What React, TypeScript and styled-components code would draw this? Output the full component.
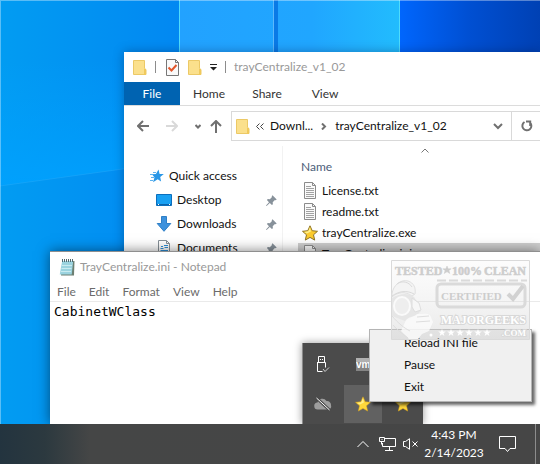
import React from "react";
import styled, { createGlobalStyle } from "styled-components";

const Global = createGlobalStyle`
  *, *::before, *::after { box-sizing: border-box; }
  html, body, #root { margin: 0; min-height: 100vh; }
  body { font: 12px/16px Lato, "Open Sans", sans-serif; color: #111; }
  button, textarea { font: inherit; color: inherit; margin: 0; padding: 0; border: 0; background: none; }
  svg { display: block; flex: none; }
  ul { list-style: none; margin: 0; padding: 0; }
`;

const Desktop = styled.main`
  position: relative;
  min-height: 100vh;
  overflow: hidden;
  display: flex;
  flex-direction: column;
  justify-content: flex-end;
  background: #0592f2;
`;

const Wallpaper = styled.svg`
  position: absolute;
  inset: 0;
`;

const Window = styled.section<{ $x: number; $y: number }>`
  position: absolute;
  left: ${(p) => p.$x}px;
  top: ${(p) => p.$y}px;
  right: 0;
  bottom: 40px;
  display: flex;
  flex-direction: column;
  background: #fff;
  overflow: hidden;
`;

const ExplorerWindow = styled(Window)`
  box-shadow: 0 0 10px rgba(0, 20, 60, 0.35);
`;

const NotepadWindow = styled(Window)`
  border-top: 1px solid #8f8f8f;
  box-shadow: 0 0 12px rgba(0, 0, 0, 0.5);
`;

const TitleBar = styled.header<{ $gap: number }>`
  display: flex;
  align-items: center;
  height: 30px;
  padding-left: 9px;
  gap: ${(p) => p.$gap}px;
  color: #999;
`;

const Title = styled.h1`
  margin: 0;
  font-size: 12px;
  font-weight: 400;
  white-space: nowrap;
`;

const Separator = styled.span`
  width: 1px;
  height: 12px;
  background: #8c8c8c;
`;

const IconSlot = styled.span`
  display: flex;
  justify-content: center;
  width: 16px;
`;

const Tabs = styled.nav`
  display: flex;
  height: 24px;
  border-bottom: 1px solid #dcdcdc;
`;

const Tab = styled.button<{ $active?: boolean }>`
  width: ${(p) => (p.$active ? 56 : 58)}px;
  height: 23px;
  color: ${(p) => (p.$active ? "#fff" : "#333")};
  background: ${(p) => (p.$active ? "#0063b1" : "transparent")};
`;

const AddressRow = styled.div`
  display: flex;
  align-items: center;
  height: 40px;
  padding-left: 13px;
`;

const NavButton = styled.button<{ $w: number }>`
  display: flex;
  justify-content: center;
  width: ${(p) => p.$w}px;
`;

const AddressBox = styled.div`
  flex: 1;
  display: flex;
  align-items: center;
  gap: 6px;
  height: 30px;
  padding-left: 4px;
  border: 1px solid #d9d9d9;
  border-right: 0;
`;

const Crumb = styled.button`
  white-space: nowrap;
`;

const Spacer = styled.span`
  flex: 1;
`;

const RefreshBox = styled.div`
  display: flex;
  align-items: center;
  height: 28px;
  width: 29px;
  padding-left: 9px;
  margin-left: 2px;
  border-left: 1px solid #d9d9d9;
`;

const PlainButton = styled.button`
  display: block;
`;

const ExplorerBody = styled.div`
  flex: 1;
  display: grid;
  grid-template-columns: 159px 1fr;
`;

const Sidebar = styled.ul`
  padding: 18px 5px 0 25px;
  border-right: 1px solid #f2f2f2;
`;

const SideItem = styled.li<{ $child?: boolean }>`
  display: flex;
  align-items: center;
  gap: 5px;
  height: 24px;
  padding-left: ${(p) => (p.$child ? 7 : 1)}px;
`;

const FilePane = styled.div`
  padding-left: 15px;
`;

const FileTable = styled.table`
  width: 100%;
  border-collapse: collapse;

  th {
    position: relative;
    height: 34px;
    padding: 8px 0 0 3px;
    text-align: left;
    font-weight: 400;
    color: #4c607a;
  }
  td {
    height: 21px;
    padding: 0 0 0 4px;
  }
`;

const SortMark = styled.svg`
  position: absolute;
  left: 123px;
  top: 2px;
`;

const FileRow = styled.tr<{ $selected?: boolean }>`
  background: ${(p) => (p.$selected ? "#cfcfcf" : "transparent")};
`;

const FileName = styled.span`
  display: flex;
  align-items: center;
  gap: 4px;
`;

const MenuBar = styled.nav`
  display: flex;
  align-items: center;
  gap: 13px;
  height: 20px;
  padding-left: 7px;
  color: #6b6b6b;
  border-bottom: 1px solid #eaeaea;
`;

const Editor = styled.textarea`
  flex: 1;
  padding: 2px 4px;
  resize: none;
  outline: none;
  color: #000;
  font: 13px/16px "DejaVu Sans Mono", monospace;
`;

const TrayPopup = styled.div`
  position: absolute;
  right: 117px;
  bottom: 40px;
  display: grid;
  grid-template-columns: repeat(3, 40px);
  grid-auto-rows: 40px;
  padding-top: 1px;
  border-left: 1px solid #8a8a8a;
  background: #4b4b4b;
  box-shadow: 0 0 8px rgba(0, 0, 0, 0.4);
`;

const TrayCell = styled.button<{ $hot?: boolean }>`
  display: flex;
  align-items: center;
  justify-content: center;
  margin: 1px;
  background: ${(p) => (p.$hot ? "#616161" : "transparent")};
`;

const ContextMenu = styled.div`
  position: absolute;
  right: 8px;
  bottom: 62px;
  width: 163px;
  display: flex;
  flex-direction: column;
  padding: 2px 0 3px;
  background: #f0f0f0;
  border: 1px solid #b4b4b4;
  box-shadow: 3px 3px 3px rgba(0, 0, 0, 0.6);
`;

const ContextItem = styled.button`
  height: 22px;
  padding-left: 34px;
  text-align: left;
`;

const Stamp = styled.svg`
  position: absolute;
  right: 10px;
  bottom: 124px;
  pointer-events: none;
`;

const Taskbar = styled.footer`
  position: relative;
  display: flex;
  align-items: center;
  justify-content: flex-end;
  height: 40px;
  color: #fff;
  background: linear-gradient(90deg, #23343f 0, #2c393f 45px, #454646 90px, #464646 100%);
`;

const TaskButton = styled.button<{ $w: number }>`
  display: flex;
  align-items: center;
  justify-content: center;
  width: ${(p) => p.$w}px;
  height: 40px;
`;

const Clock = styled.button`
  width: 66px;
  line-height: 18px;
  text-align: center;
`;

const ShowDesktop = styled.button`
  width: 5px;
  height: 40px;
  margin-left: 8px;
  border-left: 1px solid #8c8c8c;
`;

const FolderIcon = () => (
  <svg width="14" height="17" viewBox="0 0 14 17">
    <path d="M.5 1.500h11v8l1.500 1v5H.5z" fill="#fbe08c" stroke="#ecc966" />
    <path d="M11 10h2v6h-2z" fill="#f0c95c" />
  </svg>
);

const CheckDoc = () => (
  <svg width="13" height="17" viewBox="0 0 13 17">
    <path d="M.5.5h9l3 3v13H.5z" fill="#fafafa" stroke="#777" />
    <path d="M9.500.5v3h3" fill="none" stroke="#777" />
    <path d="M2.500 8.500l3 3 5-5.500" fill="none" stroke="#e2562c" strokeWidth="2" />
  </svg>
);

const TextDoc = ({ ini }: { ini?: boolean }) => (
  <svg width="12" height="17" viewBox="0 0 12 17">
    <path d="M.5.5h8l3 3v13H.5z" fill="#fafafa" stroke="#8b8b8b" />
    <path d="M8.500.5v3h3" fill="none" stroke="#8b8b8b" />
    {ini ? (
      <path d="M3 9.500l3-3 3 3-3 3z" fill="#c4c4c4" stroke="#9a9a9a" />
    ) : (
      <path d="M2 4.500h5M2 6.500h8M2 8.500h8M2 10.500h8M2 12.500h8M2 14.500h8" stroke="#a2a2a2" />
    )}
  </svg>
);

const DocumentsIcon = () => (
  <svg width="16" height="16" viewBox="0 0 16 16">
    <path d="M2.500.5h8l3 3v12h-11z" fill="#fff" stroke="#858f96" />
    <path d="M10.500.5v3h3" fill="none" stroke="#858f96" />
    <path d="M5 6.500h2M8 5.500h4M4.500 8.500h3M8.500 7.500h3.500M4.500 10.500h7.500M4.500 12.500h7.500" stroke="#2d8fd8" />
  </svg>
);

const star = "M8 .8l2.200 4.900 5.300.6-4 3.500 1.200 5.300L8 12.400l-4.700 2.700 1.200-5.300-4-3.500 5.300-.6z";

const StarIcon = ({ outlined }: { outlined?: boolean }) => (
  <svg width="16" height="16" viewBox="0 0 16 16">
    <path
      d={star}
      fill={outlined ? "#fccb2e" : "#ffd83b"}
      stroke={outlined ? "#8f7426" : "#d9a31c"}
      strokeWidth={outlined ? 1 : 0.5}
      strokeLinejoin="round"
    />
    <path d="M8 2l.9 4.500L5 8.500 2 7l4.300-.7z" fill="#fff08c" />
  </svg>
);

const QuickStar = () => (
  <svg width="14" height="14" viewBox="0 0 14 14">
    <path d="M8.500.6L9.600 5l4.200.1-3.600 2.900.9 4.600-3.400-2.400L3 13.200l1.500-4.700L2 5.200l3.900-.1z" fill="#2a97e6" />
    <path d="M0 5.500h3M1 8.500h3M0 11.500h3M3 3.500h3" stroke="#5db2ee" />
  </svg>
);

const DesktopIcon = () => (
  <svg width="16" height="16" viewBox="0 0 16 16">
    <path d="M.5 2.500h15v11H.5z" fill="#19a0f2" stroke="#0c6fbd" />
    <path d="M1 12.500h14" stroke="#0b64ac" />
    <path d="M2 12.500h1M13 12.500h1" stroke="#fff" />
  </svg>
);

const DownloadIcon = () => (
  <svg width="16" height="16" viewBox="0 0 16 16">
    <path d="M5.500.5h5v7h4.300L8 15.300 1.200 7.500h4.300z" fill="#3d92dd" stroke="#2f7fc6" />
  </svg>
);

const PinIcon = () => (
  <svg width="11" height="11" viewBox="0 0 11 11">
    <path d="M6.500.3l4.200 4.200-1 .7-.8-.2-2.200 2.200.2 2-1 .9-2.100-2.100L.6 11 0 10.400l3-3.200L.9 5.100l.9-1 2 .2L6 2.100l-.3-.8z" fill="#87919a" />
  </svg>
);

const NotepadIcon = () => (
  <svg width="16" height="17" viewBox="0 0 16 17">
    <path d="M3.500 2h12l-.5 14.500H2z" fill="#6d7f72" />
    <path d="M3.200 2h11l-1.500 13.500H.7z" fill="#9bd3df" />
    <path d="M3 6.500h10M2.500 9.500h10M2 12.500h10" stroke="#c9ebf0" />
    <path d="M3.500 0v3M5.500 0v3M7.500 0v3M9.500 0v3M11.500 0v3M13.500 0v3" stroke="#526a70" />
  </svg>
);

const UsbIcon = () => (
  <svg width="14" height="17" viewBox="0 0 14 17" fill="none" stroke="#fff">
    <path d="M2.500 6V.5h6V6M4 3.500h1M6 3.500h1M1.500 6.500h8v5M1.500 6v9.500h5" />
    <path d="M7 13l2 2.500 4-4" stroke="#d0d0d0" />
  </svg>
);

const VmIcon = () => (
  <svg width="15" height="13" viewBox="0 0 15 13">
    <path d="M0 0h15v13H0z" fill="#858585" />
    <path d="M0 0h15v4H0z" fill="#b0b0b0" />
    <text x="0" y="10" fontSize="10" fontWeight="700" fontFamily="Liberation Sans, sans-serif" fill="#fff">vm</text>
  </svg>
);

const CloudOffIcon = () => (
  <svg width="18" height="14" viewBox="0 0 18 14">
    <path d="M4 12.500a3.500 3.500 0 0 1-.5-7A5 5 0 0 1 12.500 4 4 4 0 0 1 17 8.500a3 3 0 0 1-3 4z" fill="#9d9d9d" />
    <path d="M2.500 1l13 12" stroke="#4b4b4b" strokeWidth="3" />
    <path d="M2.500 1l13 12" stroke="#fff" />
  </svg>
);

const NetworkIcon = () => (
  <svg width="17" height="14" viewBox="0 0 17 14" fill="none" stroke="#fff">
    <path d="M6 1.500h10.500v8H3.500V6M10.500 9.500v4M6 13.500h8" />
    <path d="M.5.5h5v4h-5zM3 2v1M2.500 4.500v3" />
  </svg>
);

const MutedIcon = () => (
  <svg width="15" height="12" viewBox="0 0 15 12" fill="none" stroke="#fff">
    <path d="M.5 3.500h2L6.500.7v10.600l-4-2.800h-2z" />
    <path d="M9.500 3.500l5 5M14.500 3.500l-5 5" />
  </svg>
);

const NoticeIcon = () => (
  <svg width="17" height="17" viewBox="0 0 17 17" fill="none" stroke="#fff">
    <path d="M.5.5h16v12H11l-2.500 3-2.500-3H.5z" />
  </svg>
);

type LineProps = { w: number; h: number; d: string; c?: string; s?: number };

const Line = ({ w, h, d, c = "#707070", s = 2 }: LineProps) => (
  <svg width={w} height={h} viewBox={`0 0 ${w} ${h}`} fill="none" stroke={c} strokeWidth={s}>
    <path d={d} />
  </svg>
);

const files = [
  { name: "License.txt", icon: <TextDoc /> },
  { name: "readme.txt", icon: <TextDoc /> },
  { name: "trayCentralize.exe", icon: <StarIcon outlined /> },
  { name: "TrayCentralize.ini", icon: <TextDoc ini />, selected: true },
];

const places = [
  { name: "Desktop", icon: <DesktopIcon /> },
  { name: "Downloads", icon: <DownloadIcon /> },
  { name: "Documents", icon: <DocumentsIcon /> },
];

function Backdrop() {
  return (
    <Wallpaper width="100%" height="100%" viewBox="0 0 540 464" preserveAspectRatio="xMinYMin slice" aria-hidden="true">
      <defs>
        <linearGradient id="sky" x1="0" y1="0" x2="1" y2="0">
          <stop offset="0" stopColor="#029cf2" />
          <stop offset="1" stopColor="#0288f2" />
        </linearGradient>
        <linearGradient id="glow" x1="0" y1="0" x2="0" y2="1">
          <stop offset="0" stopColor="#00a2ff" stopOpacity="0" />
          <stop offset="1" stopColor="#00a2ff" stopOpacity=".8" />
        </linearGradient>
        <linearGradient id="deep" x1="0" y1="0" x2="1" y2="0">
          <stop offset="0" stopColor="#0066fd" />
          <stop offset=".5" stopColor="#004fd2" />
          <stop offset="1" stopColor="#0041b4" />
        </linearGradient>
        <linearGradient id="pane" x1="0" y1="0" x2="1" y2="0">
          <stop offset="0" stopColor="#22a2ff" />
          <stop offset=".6" stopColor="#20a6ff" />
          <stop offset="1" stopColor="#22bcfd" />
        </linearGradient>
      </defs>
      <path d="M0 0h180v464H0z" fill="url(#sky)" />
      <path d="M0 60h130v108L0 186z" fill="url(#glow)" />
      <path d="M0 186L130 168" stroke="#3db4fb" opacity=".3" />
      <path d="M400 0h140v464H400z" fill="url(#deep)" />
      <path d="M179 0h221v464H179z" fill="url(#pane)" />
      <path d="M273 0h5v464h-5z" fill="#0a7ae6" />
      <path d="M179.500 0v60M399.500 0v60" stroke="#4fdcfc" />
      <path d="M273.500 0v60" stroke="#5cb8fb" />
      <path d="M0 .5h540M.5 0v464" stroke="#fff" opacity=".35" />
    </Wallpaper>
  );
}

function Explorer() {
  return (
    <ExplorerWindow $x={124} $y={52}>
      <TitleBar $gap={8}>
        <FolderIcon />
        <Separator />
        <IconSlot><CheckDoc /></IconSlot>
        <FolderIcon />
        <svg width="7" height="7" viewBox="0 0 7 7" fill="#222"><path d="M0 0h7v1H0zM0 3h7L3.500 6.500z" /></svg>
        <Separator />
        <Title>trayCentralize_v1_02</Title>
      </TitleBar>
      <Tabs>
        <Tab $active>File</Tab>
        <Tab>Home</Tab>
        <Tab>Share</Tab>
        <Tab>View</Tab>
      </Tabs>
      <AddressRow>
        <NavButton $w={12} aria-label="Back"><Line w={12} h={12} d="M12 6H1M6 1L1 6l5 5" /></NavButton>
        <NavButton $w={46} aria-label="Forward"><Line w={12} h={12} d="M0 6h11M6 1l5 5-5 5" c="#d9d9d9" /></NavButton>
        <NavButton $w={6} aria-label="Recent locations"><Line w={6} h={5} d="M.5 1L3 3.500 5.500 1" /></NavButton>
        <NavButton $w={30} aria-label="Up"><Line w={12} h={13} d="M6 13V1M1 6l5-5 5 5" /></NavButton>
        <AddressBox>
          <FolderIcon />
          <Line w={8} h={7} d="M3.500.5l-3 3 3 3M7.500.5l-3 3 3 3" c="#444" s={1} />
          <Crumb>Downl...</Crumb>
          <Line w={10} h={7} d="M3 .5l3 3-3 3" />
          <Crumb>trayCentralize_v1_02</Crumb>
          <Spacer />
          <PlainButton aria-label="Previous locations"><Line w={10} h={7} d="M1 1l4 4 4-4" /></PlainButton>
          <RefreshBox>
            <PlainButton aria-label="Refresh"><Line w={12} h={12} d="M9 2.600A4.500 4.500 0 1 1 3.500 2M9.200 6V1.500H5" /></PlainButton>
          </RefreshBox>
        </AddressBox>
      </AddressRow>
      <ExplorerBody>
        <Sidebar>
          <SideItem><QuickStar />Quick access</SideItem>
          {places.map((p) => (
            <SideItem $child key={p.name}>{p.icon}{p.name}<Spacer /><PinIcon /></SideItem>
          ))}
        </Sidebar>
        <FilePane>
          <FileTable>
            <thead>
              <tr>
                <th scope="col">
                  Name
                  <SortMark width="8" height="5" fill="none" stroke="#777"><path d="M.5 4.500L4 1l3.500 3.500" /></SortMark>
                </th>
              </tr>
            </thead>
            <tbody>
              {files.map((f) => (
                <FileRow key={f.name} $selected={f.selected}>
                  <td><FileName><IconSlot>{f.icon}</IconSlot>{f.name}</FileName></td>
                </FileRow>
              ))}
            </tbody>
          </FileTable>
        </FilePane>
      </ExplorerBody>
    </ExplorerWindow>
  );
}

function Notepad() {
  return (
    <NotepadWindow $x={50} $y={251}>
      <TitleBar $gap={5}>
        <NotepadIcon />
        <Title>TrayCentralize.ini - Notepad</Title>
      </TitleBar>
      <MenuBar>
        {["File", "Edit", "Format", "View", "Help"].map((m) => <button key={m}>{m}</button>)}
      </MenuBar>
      <Editor aria-label="Text" defaultValue="CabinetWClass" spellCheck={false} />
    </NotepadWindow>
  );
}

function CertifiedStamp() {
  return (
    <Stamp width="139" height="80" viewBox="0 0 139 80" fontFamily="Liberation Serif, serif" fontWeight="700">
      <defs>
        <linearGradient id="haze" x1="0" y1="0" x2="0" y2="1">
          <stop offset="0" stopColor="#dddddd" stopOpacity=".08" />
          <stop offset=".5" stopColor="#d6d6d6" stopOpacity=".25" />
          <stop offset="1" stopColor="#cccccc" stopOpacity=".45" />
        </linearGradient>
      </defs>
      <path d="M.5.5h138v79H.5z" fill="url(#haze)" stroke="#dadada" />
      <g fill="#cdcdcd" stroke="#cdcdcd" strokeWidth=".5">
        <text x="4" y="15" fontSize="12">TESTED</text>
        <text x="61" y="15" fontSize="12">100%</text>
        <text x="135" y="15" fontSize="12" textAnchor="end">CLEAN</text>
        <path d="M56 6l1.200 2.800h3L57.900 10.600l.9 2.900L56 11.700l-2.800 1.800.9-2.900L51.800 8.800h3z" />
      </g>
      <path d="M1 34c1-9 9-15 16-13 6 2 8 7 7 13l-3 2C14 31 7 32 1 37z" fill="#f4f4f4" stroke="#e0e0e0" />
      <path d="M6 24c5-4 12-2 15 3M1 36c7-5 15-6 22-2" fill="none" stroke="#dadada" />
      <path d="M1 38c8-5 17-5 22-1l4 6 3 8-4 4-12 6-13-5z" fill="#e6e6e6" />
      <ellipse cx="11" cy="46" rx="8" ry="9" fill="#eeeeee" stroke="#fafafa" strokeWidth="2" />
      <path d="M21 38l7 5 2 7-6 2-3-5z" fill="#f7f7f7" stroke="#dedede" />
      <path d="M15 60c4-4 8-3 11-6 5 0 10-1 13 1l3 7-4 9-7 3-4 5H18l-8-8z" fill="#fbfbfb" fillOpacity=".8" />
      <path d="M1 56c6 7 12 12 18 15M2 65c5 6 10 9 15 13M26 57l12-1M25 62l14-1" fill="none" stroke="#dedede" />
      <circle cx="40" cy="75" r="1.500" fill="#fff" />
      <rect x="46" y="24" width="88" height="23" rx="4" fill="none" stroke="#dadada" strokeWidth="3" />
      <path d="M46 20.500h90" fill="none" stroke="#dadada" strokeWidth="2" strokeDasharray="9 3" />
      <text x="50" y="40" fontSize="11" fill="#cdcdcd">CERTIFIED</text>
      <path d="M117 34l5 5 10-13" fill="none" stroke="#d2d2d2" strokeWidth="4" />
      <g fill="#fff" stroke="#d8d8d8" strokeWidth="2" paintOrder="stroke">
        <text x="135" y="64" fontSize="12" textAnchor="end">MAJORGEEKS</text>
        <text x="135" y="76" fontSize="9" textAnchor="end">.COM</text>
      </g>
      {[51, 60, 69, 78, 87, 96].map((x) => (
        <path key={x} d={`M${x} 69l1 2.600h2.800l-2.300 1.700.9 2.700-2.400-1.700-2.400 1.700.9-2.700-2.300-1.700h2.800z`} fill="#fff" />
      ))}
    </Stamp>
  );
}

export default function App() {
  return (
    <>
      <Global />
      <Desktop>
        <Backdrop />
        <Explorer />
        <Notepad />
        <TrayPopup>
          <TrayCell aria-label="Safely remove hardware"><UsbIcon /></TrayCell>
          <TrayCell aria-label="VM tools"><VmIcon /></TrayCell>
          <TrayCell aria-label="Empty" />
          <TrayCell aria-label="Cloud storage"><CloudOffIcon /></TrayCell>
          <TrayCell $hot aria-label="TrayCentralize"><StarIcon /></TrayCell>
          <TrayCell aria-label="TrayCentralize"><StarIcon /></TrayCell>
        </TrayPopup>
        <ContextMenu>
          <ContextItem>Reload INI file</ContextItem>
          <ContextItem>Pause</ContextItem>
          <ContextItem>Exit</ContextItem>
        </ContextMenu>
        <CertifiedStamp />
        <Taskbar>
          <TaskButton $w={24} aria-label="Hidden icons"><Line w={12} h={8} d="M.5 7L6 1.500 11.500 7" c="#fff" s={1} /></TaskButton>
          <TaskButton $w={24} aria-label="Network"><NetworkIcon /></TaskButton>
          <TaskButton $w={22} aria-label="Volume"><MutedIcon /></TaskButton>
          <Clock>4:43 PM<br />2/14/2023</Clock>
          <TaskButton $w={40} aria-label="Notifications"><NoticeIcon /></TaskButton>
          <ShowDesktop aria-label="Show desktop" />
        </Taskbar>
      </Desktop>
    </>
  );
}
